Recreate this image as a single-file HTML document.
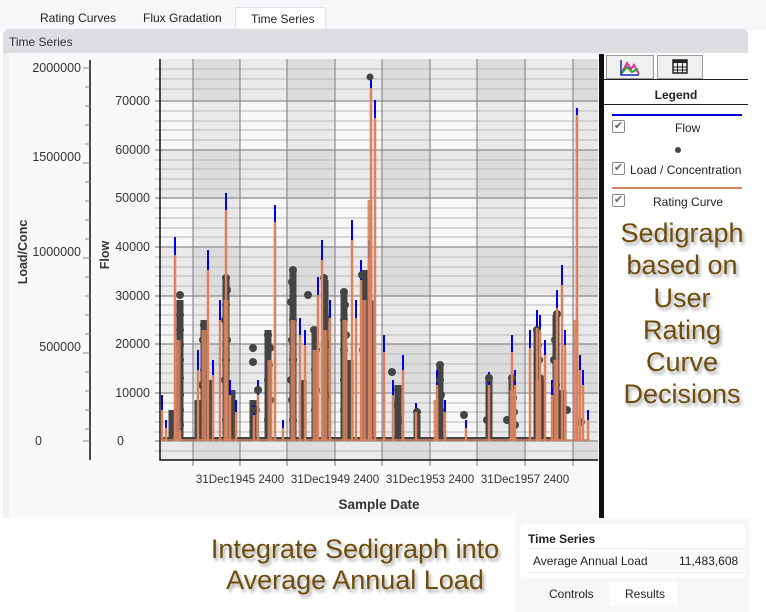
<!DOCTYPE html>
<html><head><meta charset="utf-8"><style>
*{margin:0;padding:0;box-sizing:border-box}
body{width:766px;height:612px;background:#fff;font-family:"Liberation Sans",sans-serif;position:relative;overflow:hidden}
.a{position:absolute}
.tab{font-size:12px;color:#222}
.big{font-family:"Liberation Sans",sans-serif;color:#6e4d0c;font-size:27px;text-align:center;text-shadow:2px 3px 3px rgba(0,0,0,.35)}
.lt{font-size:12px;color:#222}
</style></head><body>
<div class="a" style="left:0;top:0;width:766px;height:30px;background:#f7f7f9"></div>
<div class="a tab" style="left:40px;top:11px">Rating Curves</div>
<div class="a tab" style="left:143px;top:11px">Flux Gradation</div>
<div class="a" style="left:235px;top:7px;width:91px;height:24px;background:#fff;border:1px solid #e2e2e6;border-bottom:none"></div>
<div class="a tab" style="left:251px;top:12px">Time Series</div>
<div class="a" style="left:3px;top:29px;width:745px;height:24px;background:#dddde2;border-radius:6px 6px 0 0"></div>
<div class="a" style="left:9px;top:35px;font-size:12px;color:#333">Time Series</div>
<div class="a" style="left:3px;top:53px;width:6px;height:465px;background:#f0f0f3"></div>
<div class="a" style="left:9px;top:53px;width:591px;height:465px;background:#f9f9f9"></div>

<svg class="a" style="left:0;top:0" width="766" height="612" xmlns="http://www.w3.org/2000/svg" font-family="Liberation Sans, sans-serif">
<rect x="160" y="59" width="438" height="401" fill="#f8f8f8"/>
<g fill="rgba(0,0,0,0.06)">
<rect x="193" y="59" width="47" height="401"/><rect x="287" y="59" width="48" height="401"/><rect x="382" y="59" width="48" height="401"/><rect x="477" y="59" width="48" height="401"/><rect x="573" y="59" width="25" height="401"/>
</g>
<g fill="rgba(0,0,0,0.055)">
<rect x="160" y="59" width="438" height="42"/><rect x="160" y="150" width="438" height="48"/><rect x="160" y="247" width="438" height="49"/><rect x="160" y="344" width="438" height="49"/><rect x="160" y="441" width="438" height="19"/>
</g>
<g stroke="#b8b8b8" stroke-width="1">
<path d="M155 69H598M155 79H598M155 89H598M155 111H598M155 121H598M155 130H598M155 140H598M155 160H598M155 169H598M155 179H598M155 189H598M155 208H598M155 218H598M155 228H598M155 237H598M155 257H598M155 267H598M155 276H598M155 286H598M155 305H598M155 315H598M155 325H598M155 335H598M155 354H598M155 364H598M155 373H598M155 383H598M155 403H598M155 412H598M155 422H598M155 432H598M155 451H598"/>
</g>
<g stroke="#8c8c8c" stroke-width="1.2">
<path d="M155 101H598M155 150H598M155 198H598M155 247H598M155 296H598M155 344H598M155 393H598M155 441H598"/>
<path d="M193 59V466M240 59V466M287 59V466M335 59V466M382 59V466M430 59V466M477 59V466M525 59V466M573 59V466"/>
</g>
<path d="M160 59V460H598" stroke="#111" stroke-width="1.5" fill="none"/>
<path d="M90 60V460" stroke="#111" stroke-width="1.5"/>
<g stroke="#888"><path d="M83 68H90M85 87H90M85 106H90M85 125H90M85 144H90M83 163H90M85 182H90M85 201H90M85 220H90M85 239H90M83 258H90M85 277H90M85 296H90M85 315H90M85 334H90M83 353H90M85 372H90M85 391H90M85 410H90M85 429H90M83 441H90"/></g>
<g font-size="12.5" fill="#333" text-anchor="end">
<text x="81" y="72">2000000</text><text x="81" y="161">1500000</text><text x="81" y="256">1000000</text><text x="81" y="351">500000</text><text x="42" y="445">0</text>
<text x="150" y="105">70000</text><text x="150" y="154">60000</text><text x="150" y="202">50000</text><text x="150" y="251">40000</text><text x="150" y="300">30000</text><text x="150" y="348">20000</text><text x="150" y="397">10000</text><text x="124" y="445">0</text>
</g>
<text transform="translate(27,252) rotate(-90)" text-anchor="middle" font-size="12.5" font-weight="bold" fill="#333">Load/Conc</text>
<text transform="translate(109,255) rotate(-90)" text-anchor="middle" font-size="12.5" font-weight="bold" fill="#333">Flow</text>
<g font-size="11.6" fill="#333" text-anchor="middle">
<text x="240" y="483">31Dec1945 2400</text><text x="335" y="483">31Dec1949 2400</text><text x="430" y="483">31Dec1953 2400</text><text x="525" y="483">31Dec1957 2400</text>
</g>
<text x="379" y="509" text-anchor="middle" font-size="13.5" font-weight="bold" fill="#333">Sample Date</text>

<path d="M161 439H565" stroke="#444" stroke-width="4"/>
<g stroke="#444" stroke-width="7">
<path d="M172 441V410M180 441V300M198 441V400M204 441V320M210 441V380M226 441V280M232 441V390M253 441V400M268 441V330M293 441V270M303 441V380M315 441V330M325 441V280M344 441V290M350 441V360M364 441V270M370 441V300M398 441V385M417 441V415M440 441V365M489 441V380M512 441V380M537 441V330M542 441V380M556 441V315M563 441V390"/>
</g>
<g stroke="#0000ee" stroke-width="2">
<path d="M162 441V395M166 441V420M175 441V237M180 441V420M198 441V350M208 441V250M213 441V360M220 441V300M226 441V193M230 441V380M236 441V400M254 441V405M258 441V380M275 441V205M283 441V420M300 441V318M305 441V330M318 441V277M322 441V240M330 441V300M352 441V220M356 441V300M361 441V260M369 441V240M371 441V75M375 441V100M384 441V335M393 441V380M403 441V355M416 441V403M437 441V370M445 441V400M466 441V420M489 441V372M512 441V335M515 441V370M530 441V330M537 441V310M540 441V315M545 441V340M552 441V380M557 441V290M562 441V265M565 441V330M577 441V108M580 441V355M583 441V370M588 441V410"/>
</g>
<g fill="#444">
<circle cx="370" cy="77" r="3.5"/>
<circle cx="180" cy="295" r="4"/><circle cx="180" cy="315" r="4"/><circle cx="180" cy="330" r="4"/><circle cx="180" cy="345" r="4"/><circle cx="180" cy="360" r="4"/><circle cx="180" cy="378" r="4"/><circle cx="180" cy="395" r="4"/><circle cx="180" cy="410" r="4"/><circle cx="180" cy="425" r="4"/>
<circle cx="204" cy="325" r="4"/><circle cx="203" cy="340" r="4"/><circle cx="205" cy="355" r="4"/><circle cx="204" cy="370" r="4"/><circle cx="202" cy="385" r="4"/><circle cx="206" cy="400" r="4"/><circle cx="204" cy="415" r="4"/><circle cx="203" cy="430" r="4"/>
<circle cx="226" cy="278" r="4"/><circle cx="227" cy="290" r="4"/><circle cx="226" cy="305" r="4"/><circle cx="225" cy="320" r="4"/><circle cx="227" cy="340" r="4"/><circle cx="226" cy="360" r="4"/><circle cx="225" cy="380" r="4"/><circle cx="227" cy="400" r="4"/><circle cx="226" cy="420" r="4"/>
<circle cx="253" cy="348" r="4"/><circle cx="253" cy="362" r="4"/><circle cx="258" cy="390" r="4"/><circle cx="256" cy="410" r="4"/>
<circle cx="268" cy="335" r="4"/><circle cx="270" cy="348" r="4"/><circle cx="269" cy="365" r="4"/><circle cx="268" cy="380" r="4"/><circle cx="270" cy="400" r="4"/><circle cx="268" cy="420" r="4"/>
<circle cx="293" cy="270" r="4"/><circle cx="292" cy="282" r="4"/><circle cx="291" cy="302" r="4"/><circle cx="293" cy="320" r="4"/><circle cx="292" cy="340" r="4"/><circle cx="293" cy="360" r="4"/><circle cx="291" cy="380" r="4"/><circle cx="292" cy="400" r="4"/><circle cx="293" cy="420" r="4"/>
<circle cx="308" cy="295" r="4"/><circle cx="314" cy="330" r="4"/><circle cx="316" cy="350" r="4"/><circle cx="315" cy="370" r="4"/><circle cx="316" cy="390" r="4"/><circle cx="315" cy="410" r="4"/>
<circle cx="324" cy="278" r="4"/><circle cx="326" cy="318" r="4"/><circle cx="327" cy="345" r="4"/><circle cx="325" cy="370" r="4"/><circle cx="327" cy="395" r="4"/>
<circle cx="344" cy="292" r="4"/><circle cx="345" cy="305" r="4"/><circle cx="344" cy="320" r="4"/><circle cx="346" cy="335" r="4"/><circle cx="344" cy="350" r="4"/><circle cx="345" cy="365" r="4"/><circle cx="344" cy="380" r="4"/><circle cx="346" cy="395" r="4"/><circle cx="344" cy="410" r="4"/><circle cx="345" cy="425" r="4"/>
<circle cx="362" cy="275" r="4"/><circle cx="364" cy="300" r="4"/><circle cx="365" cy="325" r="4"/><circle cx="363" cy="350" r="4"/><circle cx="364" cy="375" r="4"/><circle cx="365" cy="400" r="4"/><circle cx="364" cy="425" r="4"/>
<circle cx="392" cy="372" r="4"/><circle cx="398" cy="390" r="4"/><circle cx="396" cy="405" r="4"/><circle cx="400" cy="420" r="4"/>
<circle cx="417" cy="412" r="4"/><circle cx="440" cy="365" r="4"/><circle cx="440" cy="380" r="4"/><circle cx="441" cy="395" r="4"/><circle cx="440" cy="410" r="4"/><circle cx="464" cy="415" r="4"/>
<circle cx="489" cy="378" r="4"/><circle cx="487" cy="420" r="4"/>
<circle cx="507" cy="420" r="4"/><circle cx="512" cy="378" r="4"/><circle cx="513" cy="398" r="4"/><circle cx="514" cy="412" r="4"/><circle cx="515" cy="425" r="4"/>
<circle cx="537" cy="330" r="4"/><circle cx="538" cy="345" r="4"/><circle cx="539" cy="360" r="4"/><circle cx="540" cy="378" r="4"/><circle cx="540" cy="400" r="4"/><circle cx="541" cy="418" r="4"/>
<circle cx="557" cy="314" r="4"/><circle cx="555" cy="340" r="4"/><circle cx="554" cy="360" r="4"/><circle cx="556" cy="385" r="4"/><circle cx="555" cy="405" r="4"/>
<circle cx="567" cy="410" r="4"/><circle cx="581" cy="422" r="4"/>
</g>
<g stroke="#d8825e" stroke-width="2.5">
<path d="M162 441V410M166 441V428M175 441V255M180 441V430M198 441V370M208 441V270M213 441V375M220 441V320M226 441V210M230 441V395M236 441V412M254 441V415M258 441V395M275 441V222M283 441V428M300 441V335M305 441V345M318 441V295M322 441V260M330 441V318M352 441V240M356 441V318M361 441V280M369 441V258M371 441V88M375 441V118M384 441V352M393 441V395M403 441V370M416 441V412M437 441V385M445 441V412M466 441V428M489 441V385M512 441V352M515 441V385M530 441V348M537 441V328M540 441V330M545 441V355M552 441V395M557 441V308M562 441V285M565 441V345M577 441V115M580 441V370M583 441V385M588 441V420"/>
</g>
<g stroke="#d8825e" stroke-width="5" opacity=".85">
<path d="M178 441V340M204 441V330M226 441V300M270 441V360M293 441V320M315 441V350M325 441V330M345 441V320M364 441V300M370 441V200M436 441V400M512 441V390M538 441V380M556 441V360M576 441V320"/>
</g>
<path d="M161 440H590" stroke="#d8825e" stroke-width="1.5"/>
<rect x="599" y="54" width="5" height="464" fill="#111"/>
</svg>

<div class="a" style="left:604px;top:54px;width:144px;height:464px;background:#fff"></div>
<div class="a" style="left:606px;top:55px;width:48px;height:24px;background:#f0f0f0;border:1px solid #999"></div>
<svg class="a" style="left:620px;top:59px" width="20" height="17"><path d="M1 15L7 4L11 10L14 6L19 15" stroke="#e0309a" stroke-width="2" fill="none"/><path d="M1 15L7 8L12 13L18 10" stroke="#30a030" stroke-width="2" fill="none"/><path d="M1 1V16H19" stroke="#1030c0" stroke-width="1.5" fill="none"/></svg>
<div class="a" style="left:657px;top:55px;width:46px;height:24px;background:#f0f0f0;border:1px solid #999"></div>
<svg class="a" style="left:672px;top:59px" width="16" height="15"><rect x="1" y="1" width="14" height="13" fill="none" stroke="#222" stroke-width="1.5"/><rect x="1" y="1" width="14" height="3" fill="#222"/><path d="M5.5 1V14M10.5 1V14M1 8H15M1 11H15" stroke="#222"/></svg>
<div class="a" style="left:604px;top:79px;width:144px;height:1px;background:#222"></div>
<div class="a" style="left:604px;top:88px;width:144px;text-align:center;font-size:12px;font-weight:bold;color:#222">Legend</div>
<div class="a" style="left:604px;top:104px;width:144px;height:1px;background:#222"></div>
<div class="a" style="left:612px;top:114px;width:130px;height:2px;background:#0000dd"></div>
<div class="a" style="left:612px;top:187px;width:130px;height:2px;background:#d8825e"></div>
<div class="a" style="left:612px;top:120px;width:13px;height:13px;border:1px solid #888;border-radius:2px;color:#666;font-size:11px;line-height:11px;text-align:center">✔</div>
<div class="a lt" style="left:675px;top:121px">Flow</div>
<div class="a" style="left:675px;top:147px;width:6px;height:6px;border-radius:50%;background:#444"></div>
<div class="a" style="left:612px;top:162px;width:13px;height:13px;border:1px solid #888;border-radius:2px;color:#666;font-size:11px;line-height:11px;text-align:center">✔</div>
<div class="a lt" style="left:630px;top:163px">Load / Concentration</div>
<div class="a" style="left:612px;top:194px;width:13px;height:13px;border:1px solid #888;border-radius:2px;color:#666;font-size:11px;line-height:11px;text-align:center">✔</div>
<div class="a lt" style="left:653px;top:195px">Rating Curve</div>
<div class="a big" style="left:606px;top:217px;width:152px;line-height:32.3px">Sedigraph<br>based on<br>User<br>Rating<br>Curve<br>Decisions</div>

<div class="a big" style="left:170px;top:534px;width:370px;line-height:31px">Integrate Sedigraph into<br>Average Annual Load</div>

<div class="a" style="left:515px;top:518px;width:234px;height:94px;background:#f7f7fa"></div>
<div class="a" style="left:520px;top:524px;width:226px;height:54px;background:#fff;border-radius:5px"></div>
<div class="a" style="left:528px;top:532px;font-size:12px;font-weight:bold;color:#222">Time Series</div>
<div class="a" style="left:527px;top:548px;width:218px;height:1px;background:#eee"></div>
<div class="a" style="left:648px;top:549px;width:97px;height:23px;background:#f9f9f9"></div>
<div class="a" style="left:533px;top:554px;font-size:12px;color:#222">Average Annual Load</div>
<div class="a" style="left:679px;top:554px;font-size:12px;color:#222">11,483,608</div>
<div class="a" style="left:527px;top:572px;width:218px;height:1px;background:#eee"></div>
<div class="a" style="left:609px;top:582px;width:68px;height:23px;background:#fff"></div>
<div class="a" style="left:549px;top:587px;font-size:12px;color:#222">Controls</div>
<div class="a" style="left:625px;top:587px;font-size:12px;color:#222">Results</div>
</body></html>
